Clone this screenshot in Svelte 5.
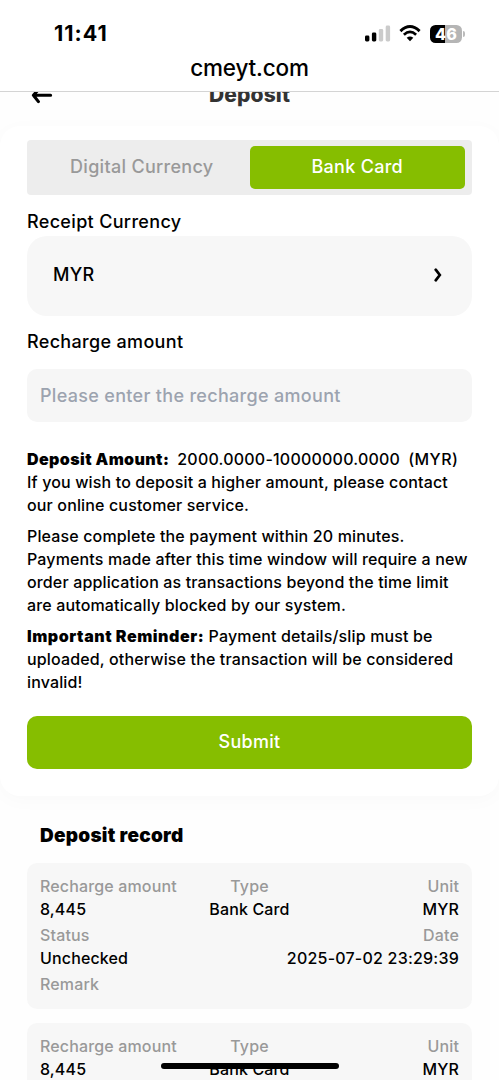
<script>
	const tabs = ['Digital Currency', 'Bank Card'];

	let activeTab = $state('Bank Card');
	let amount = $state('');

	const records = [
		{ amount: '8,445', type: 'Bank Card', unit: 'MYR', status: 'Unchecked', date: '2025-07-02 23:29:39' },
		{ amount: '8,445', type: 'Bank Card', unit: 'MYR', status: 'Unchecked', date: '2025-07-02 23:29:39' }
	];
</script>

<div class="screen">
	<header class="browser">
		<div class="status">
			<span class="time">11:41</span>
			<div class="icons">
				<svg class="signal" width="26" height="17" viewBox="0 0 26 17">
					<rect x="0" y="10.5" width="4.4" height="6" rx="1.4" />
					<rect x="6.9" y="7.5" width="4.4" height="9" rx="1.4" />
					<rect x="13.8" y="4" width="4.4" height="12.5" rx="1.4" fill="#cbcbcb" />
					<rect x="20.7" y="0.5" width="4.4" height="16" rx="1.4" fill="#cbcbcb" />
				</svg>
				<svg class="wifi" width="22" height="17" viewBox="0 0 22 17">
					<path d="M1.4 6.1Q11-2.9 20.6 6.1" fill="none" stroke="#000" stroke-width="2.9" />
					<path d="M4.9 9.7Q11 4.1 17.1 9.7" fill="none" stroke="#000" stroke-width="2.7" />
					<path d="M7.7 12.8Q11 10.1 14.3 12.8L11 16.2Z" />
				</svg>
				<div class="battery">
					<div class="level"><span>46</span></div>
					<i></i>
				</div>
			</div>
		</div>
		<div class="url">cmeyt.com</div>
	</header>

	<main>
		<nav>
			<svg class="back" width="24" height="20" viewBox="0 0 24 20">
				<path
					d="M20.6 10.2H3.4M9.4 3.6L3.4 10.2L8.4 16.6"
					fill="none"
					stroke="#000"
					stroke-width="3.1"
					stroke-linecap="round"
					stroke-linejoin="round"
				/>
			</svg>
			<h1>Deposit</h1>
		</nav>

		<section class="card">
			<div class="tabs">
				{#each tabs as tab}
					<button class={tab === activeTab ? 'active' : ''} onclick={() => (activeTab = tab)}>{tab}</button>
				{/each}
			</div>

			<div class="label">Receipt Currency</div>
			<div class="select">
				<span>MYR</span>
				<svg width="8" height="14" viewBox="0 0 8 14">
					<path d="M1.7 1.7L5.8 7L1.7 12.3" fill="none" stroke="#000" stroke-width="2.7" stroke-linecap="round" />
				</svg>
			</div>

			<div class="label amount">Recharge amount</div>
			<input placeholder="Please enter the recharge amount" bind:value={amount} />

			<div class="notes">
				<p>
					<b>Deposit Amount:</b><span class="range">2000.0000-10000000.0000</span><span class="unit">(MYR)</span><br />
					If you wish to deposit a higher amount, please contact<br />
					our online customer service.
				</p>
				<p>
					Please complete the payment within 20 minutes.<br />
					Payments made after this time window will require a new<br />
					order application as transactions beyond the time limit<br />
					are automatically blocked by our system.
				</p>
				<p>
					<b class="reminder">Important Reminder:</b> Payment details/slip must be<br />
					uploaded, otherwise the transaction will be considered<br />
					invalid!
				</p>
			</div>

			<button class="submit">Submit</button>
		</section>

		<section class="records">
			<h2>Deposit record</h2>
			{#each records as record}
				<div class="record">
					<div class="row">
						<div><em>Recharge amount</em><span>{record.amount}</span></div>
						<div><em>Type</em><span>{record.type}</span></div>
						<div><em>Unit</em><span>{record.unit}</span></div>
					</div>
					<div class="row">
						<div><em>Status</em><span>{record.status}</span></div>
						<div><em>Date</em><span class="date">{record.date}</span></div>
					</div>
					<div class="row">
						<div><em>Remark</em></div>
					</div>
				</div>
			{/each}
		</section>
	</main>

	<div class="home-bar"></div>
</div>

<style>
	:global(body) {
		margin: 0;
		background: #fff;
	}

	.screen {
		position: relative;
		display: flex;
		flex-direction: column;
		height: 1080px;
		overflow: hidden;
		background: #fefefe;
		color: #000;
		font-family: Inter, 'Liberation Sans', sans-serif;
		font-weight: 540;
		font-size: 16px;
		letter-spacing: 0.145px;
	}

	.browser {
		flex: none;
		box-sizing: border-box;
		height: 92px;
		padding-top: 20px;
		border-bottom: 1px solid #d4d4d4;
		background: #fff;
	}

	.status {
		display: flex;
		justify-content: space-between;
		align-items: center;
		height: 27px;
		padding: 0 34px 0 54px;
	}

	.time {
		padding-bottom: 1px;
		font-size: 21.5px;
		font-weight: 750;
		letter-spacing: 1px;
	}

	.icons {
		display: flex;
		align-items: center;
	}

	.wifi {
		margin: 0 9px 0 8px;
	}

	.battery {
		display: flex;
		align-items: center;
	}

	.level {
		width: 32px;
		height: 18px;
		border-radius: 5.5px;
		background: linear-gradient(90deg, #000 47%, #b5b5b5 47%);
		color: #fff;
		font-size: 16px;
		font-weight: 800;
		line-height: 18px;
		text-align: center;
	}

	.battery i {
		width: 2px;
		height: 6px;
		margin-left: 1px;
		border-radius: 0 2px 2px 0;
		background: #bbb;
	}

	.url {
		height: 42px;
		font-size: 22.5px;
		font-weight: 500;
		letter-spacing: -0.15px;
		line-height: 42px;
		text-align: center;
	}

	main {
		flex: 1;
		min-height: 0;
		overflow: hidden;
	}

	nav {
		display: grid;
		grid-template-columns: 60px 1fr 60px;
		align-items: center;
		height: 62px;
		margin-top: -28px;
	}

	.back {
		margin-left: 29.5px;
	}

	h1 {
		margin: 0;
		color: #333;
		font-size: 21px;
		font-weight: 800;
		line-height: 26px;
		text-align: center;
	}

	.card {
		box-sizing: border-box;
		height: 670px;
		padding: 14px 27px 0;
		border-radius: 20px;
		background: #fff;
		box-shadow: 0 4px 20px rgba(0, 0, 0, 0.022);
	}

	.tabs {
		display: flex;
		box-sizing: border-box;
		height: 55px;
		padding: 6px 7px;
		border-radius: 4px;
		background: #ededed;
	}

	button {
		padding: 0 0 2px;
		border: 0;
		background: none;
		font: inherit;
		letter-spacing: 0.3px;
	}

	.tabs button {
		flex: 1;
		border-radius: 5px;
		color: #999;
		font-size: 18px;
	}

	.tabs button.active {
		background: #86be00;
		color: #fff;
	}

	.label {
		margin-top: 13px;
		font-size: 18px;
		letter-spacing: 0.33px;
		line-height: 28px;
	}

	.label.amount {
		margin-top: 12px;
	}

	.select {
		display: flex;
		justify-content: space-between;
		align-items: center;
		box-sizing: border-box;
		height: 80px;
		padding: 0 30px 2px 26px;
		border-radius: 20px;
		background: #f7f7f7;
		font-size: 18px;
	}

	.select span {
		padding-bottom: 1px;
		letter-spacing: 0.3px;
	}

	input {
		display: block;
		box-sizing: border-box;
		width: 100%;
		height: 53px;
		margin-top: 13px;
		padding: 0 13px;
		border: 0;
		border-radius: 10px;
		background: #f6f6f6;
		font: inherit;
		font-size: 18px;
		letter-spacing: 0.31px;
	}

	input::placeholder {
		color: #9ca3af;
		opacity: 1;
	}

	.notes {
		height: 268px;
		padding-top: 26px;
		line-height: 23.2px;
		white-space: nowrap;
	}

	p {
		margin: 0 0 7.2px;
	}

	b {
		font-weight: 900;
		letter-spacing: 0.4px;
	}

	b.reminder {
		letter-spacing: 0.55px;
	}

	.range {
		margin: 0 8px;
		letter-spacing: 0.22px;
	}

	.unit {
		letter-spacing: 0.45px;
	}

	.submit {
		width: 100%;
		height: 53px;
		border-radius: 10px;
		background: #86be00;
		color: #fff;
		font-size: 18px;
	}

	.records {
		padding: 25px 27px 0;
	}

	h2 {
		margin: 0 0 12px 13px;
		font-size: 19px;
		font-weight: 900;
		letter-spacing: 0.25px;
		line-height: 30px;
	}

	.record {
		box-sizing: border-box;
		height: 146px;
		margin-bottom: 14px;
		padding: 12.2px 13px;
		border-radius: 10px;
		background: #f7f7f7;
		line-height: 23px;
	}

	.row {
		display: flex;
		justify-content: space-between;
		margin-bottom: 3px;
	}

	.row div {
		display: flex;
		flex-direction: column;
		flex: 1;
		align-items: center;
	}

	.row div:first-child {
		align-items: flex-start;
	}

	.row div:last-child:not(:first-child) {
		align-items: flex-end;
	}

	.date {
		letter-spacing: 0.22px;
	}

	em {
		color: #999;
		font-style: normal;
	}

	.home-bar {
		position: absolute;
		bottom: 11px;
		left: 161px;
		width: 178px;
		height: 6px;
		border-radius: 3px;
		background: #000;
	}
</style>
